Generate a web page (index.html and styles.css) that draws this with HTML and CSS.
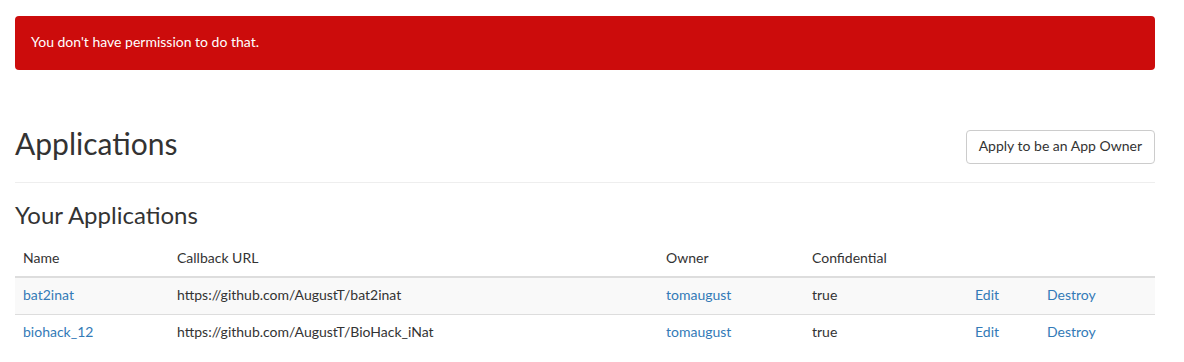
FILE: index.html
```html
<!DOCTYPE html>
<html lang="en">
<head>
    <meta charset="UTF-8">
    <title>Applications</title>
    <link rel="stylesheet" href="styles.css">
</head>
<body>
    <div class="container">
        <div class="alert">You don't have permission to do that.</div>

        <div class="page-header">
            <h1>Applications</h1>
            <a class="btn" href="#">Apply to be an App Owner</a>
        </div>

        <h3>Your Applications</h3>

        <table class="apps">
            <thead>
                <tr>
                    <th class="col-name">Name</th>
                    <th class="col-url">Callback URL</th>
                    <th class="col-owner">Owner</th>
                    <th class="col-conf">Confidential</th>
                    <th class="col-edit"></th>
                    <th class="col-destroy"></th>
                </tr>
            </thead>
            <tbody>
                <tr>
                    <td><a href="#">bat2inat</a></td>
                    <td>https://github.com/AugustT/bat2inat</td>
                    <td><a href="#">tomaugust</a></td>
                    <td>true</td>
                    <td><a href="#">Edit</a></td>
                    <td><a href="#">Destroy</a></td>
                </tr>
                <tr>
                    <td><a href="#">biohack_12</a></td>
                    <td>https://github.com/AugustT/BioHack_iNat</td>
                    <td><a href="#">tomaugust</a></td>
                    <td>true</td>
                    <td><a href="#">Edit</a></td>
                    <td><a href="#">Destroy</a></td>
                </tr>
            </tbody>
        </table>
    </div>
</body>
</html>
```

FILE: styles.css
```css
body {
    font-family: Lato, "Open Sans", sans-serif;
    font-size: 14px;
    line-height: 20px;
    color: #333333;
    background: #ffffff;
    margin: 0;
}

a {
    color: #337ab7;
    text-decoration: none;
}

.container {
    width: 1140px;
    margin-left: 15px;
    padding-top: 16px;
}

.alert {
    background: #cc0c0c;
    color: #ffffff;
    padding: 16px 16px 18px;
    border-radius: 4px;
}

.page-header {
    display: flex;
    justify-content: space-between;
    align-items: flex-start;
    margin-top: 55px;
    padding-bottom: 18px;
    border-bottom: 1px solid #eeeeee;
}

h1 {
    margin: 0;
    font-size: 30px;
    font-weight: 400;
    line-height: 36px;
}

.btn {
    margin-top: 5px;
    display: inline-block;
    padding: 5px 12px 7px;
    border: 1px solid #cccccc;
    border-radius: 4px;
    color: #333333;
    background: #ffffff;
}

h3 {
    margin: 19px 0 13px;
    font-size: 24px;
    font-weight: 400;
    line-height: 26px;
}

.apps {
    width: 100%;
    border-collapse: collapse;
    border-spacing: 0;
    table-layout: fixed;
}

.apps th, .apps td {
    box-sizing: border-box;
    text-align: left;
    padding: 8px;
    vertical-align: top;
}

.apps th {
    font-weight: 400;
    padding-top: 7px;
    border-bottom: 2px solid #dddddd;
}

.apps tbody td {
    border-top: 1px solid #dddddd;
    padding-top: 7px;
    padding-bottom: 9px;
}

.apps tbody tr:first-child td {
    border-top: none;
}

.apps tbody tr:nth-child(odd) {
    background: #f9f9f9;
}

.col-name { width: 154px; }
.col-url { width: 489px; }
.col-owner { width: 146px; }
.col-conf { width: 163px; }
.col-edit { width: 72px; }
```
